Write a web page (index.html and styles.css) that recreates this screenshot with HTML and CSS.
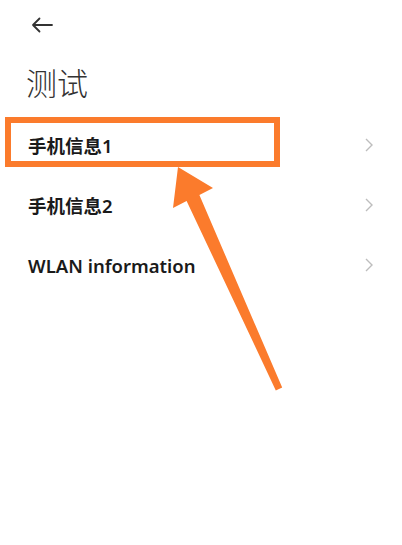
FILE: index.html
```html
<!DOCTYPE html>
<html lang="zh-CN">
<head>
    <meta charset="UTF-8">
    <meta name="viewport" content="width=device-width, initial-scale=1.0">
    <title>测试</title>
    <link rel="stylesheet" href="styles.css">
</head>
<body>
    <div class="page">
        <div class="topbar">
            <svg class="back" width="22" height="16" viewBox="0 0 22 16">
                <path d="M21 8H2M8.5 1.5L2 8l6.5 6.5" fill="none" stroke="#333" stroke-width="1.8" stroke-linecap="round" stroke-linejoin="round"/>
            </svg>
        </div>

        <h1 class="title">测试</h1>

        <ul class="menu">
            <li class="row">
                <span>手机信息1</span>
                <svg class="chev" width="8" height="14" viewBox="0 0 8 14"><path d="M1 1l6 6-6 6" fill="none" stroke="#bdbdbd" stroke-width="1.4"/></svg>
            </li>
            <li class="row">
                <span>手机信息2</span>
                <svg class="chev" width="8" height="14" viewBox="0 0 8 14"><path d="M1 1l6 6-6 6" fill="none" stroke="#bdbdbd" stroke-width="1.4"/></svg>
            </li>
            <li class="row">
                <span>WLAN information</span>
                <svg class="chev" width="8" height="14" viewBox="0 0 8 14"><path d="M1 1l6 6-6 6" fill="none" stroke="#bdbdbd" stroke-width="1.4"/></svg>
            </li>
        </ul>

        <!-- 标注框和箭头 -->
        <div class="mark-box"></div>
        <svg class="mark-arrow" width="402" height="545" viewBox="0 0 402 545">
            <polygon points="178,167 213,188 199.4,195.1 282.2,387.6 275.8,390.4 186.6,200.9 173,208" fill="#fb7b2c"/>
        </svg>
    </div>
</body>
</html>
```

FILE: styles.css
```css
body {
    margin: 0;
    background: #fff;
    font-family: "Noto Sans", "Noto Sans CJK SC", sans-serif;
    color: #1a1a1a;
}
.page {
    position: relative;
    width: 402px;
    height: 545px;
    overflow: hidden;
}
.topbar {
    height: 50px;
    display: flex;
    align-items: center;
    padding-left: 31px;
}
.back {
    display: block;
}
.title {
    margin: 0;
    height: 62px;
    padding-left: 26px;
    padding-bottom: 3px;
    display: flex;
    align-items: center;
    font-family: "Noto Sans CJK SC", sans-serif;
    font-size: 31px;
    font-weight: 300;
    color: #333;
}
.menu {
    list-style: none;
    margin: 0;
    padding: 0;
}
.row {
    height: 60px;
    display: flex;
    align-items: center;
    justify-content: space-between;
    padding: 0 29px 0 28px;
    font-size: 18.5px;
    font-weight: 600;
}
.mark-box {
    position: absolute;
    left: 5px;
    top: 117px;
    width: 263px;
    height: 38px;
    border: 6px solid #fb7b2c;
}
.mark-arrow {
    position: absolute;
    left: 0;
    top: 0;
}
```
